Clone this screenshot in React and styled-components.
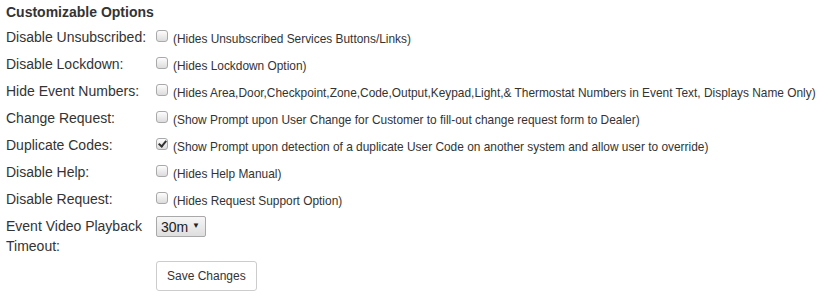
import React, { useState } from "react";
import styled, { createGlobalStyle } from "styled-components";

const GlobalStyle = createGlobalStyle`
  body {
    margin: 0;
    background: #fff;
    font-family: "Liberation Sans", Arial, sans-serif;
    color: #333;
  }
`;

const Container = styled.div`
  padding: 3px 6px 0;
`;

const Title = styled.div`
  font-size: 14px;
  font-weight: 700;
  line-height: 18px;
  margin-bottom: 2px;
`;

const Row = styled.div`
  display: flex;
  align-items: ${(p) => (p.$top ? "flex-start" : "center")};
  min-height: 27px;
  margin-top: ${(p) => (p.$top ? "4px" : "0")};
`;

const Label = styled.div`
  width: 150px;
  flex-shrink: 0;
  font-size: 14px;
  line-height: 20px;
`;

const Check = styled.input.attrs({ type: "checkbox" })`
  appearance: none;
  width: 12px;
  height: 12px;
  margin: 0 5px 0 0;
  border: 1px solid #a9a9a9;
  border-radius: 3px;
  background: linear-gradient(#fdfdfd, #dcdcdc);
  position: relative;
  top: -1px;
  flex-shrink: 0;

  &:checked::after {
    content: "";
    position: absolute;
    left: 3px;
    top: 0px;
    width: 3px;
    height: 6px;
    border: solid #333;
    border-width: 0 2px 2px 0;
    transform: rotate(40deg);
  }
`;

const Note = styled.span`
  font-size: 11.9px;
  position: relative;
  top: 2px;
`;

const SelectWrap = styled.div`
  position: relative;
  display: inline-block;
`;

const Select = styled.select`
  appearance: none;
  height: 21px;
  width: 50px;
  padding: 0 0 0 4px;
  border: 1px solid #a9a9a9;
  border-radius: 2px;
  background: linear-gradient(#f6f6f6, #dedede);
  font-family: "Liberation Sans", Arial, sans-serif;
  font-size: 14px;
  color: #222;
`;

const Arrow = styled.span`
  position: absolute;
  right: 6px;
  top: 5px;
  font-size: 8px;
  color: #222;
  pointer-events: none;
`;

const ButtonRow = styled.div`
  padding: 5px 0 0 150px;
`;

const Button = styled.button`
  height: 30px;
  padding: 0 10px;
  background: #fff;
  border: 1px solid #ccc;
  border-radius: 3px;
  font-family: "Liberation Sans", Arial, sans-serif;
  font-size: 12px;
  color: #333;
`;

const options = [
  ["Disable Unsubscribed:", "(Hides Unsubscribed Services Buttons/Links)", false],
  ["Disable Lockdown:", "(Hides Lockdown Option)", false],
  [
    "Hide Event Numbers:",
    "(Hides Area,Door,Checkpoint,Zone,Code,Output,Keypad,Light,& Thermostat Numbers in Event Text, Displays Name Only)",
    false,
  ],
  ["Change Request:", "(Show Prompt upon User Change for Customer to fill-out change request form to Dealer)", false],
  ["Duplicate Codes:", "(Show Prompt upon detection of a duplicate User Code on another system and allow user to override)", true],
  ["Disable Help:", "(Hides Help Manual)", false],
  ["Disable Request:", "(Hides Request Support Option)", false],
];

const App = () => {
  const [checked, setChecked] = useState(options.map((o) => o[2]));

  return (
    <Container>
      <GlobalStyle />
      <Title>Customizable Options</Title>
      {options.map(([label, note], i) => (
        <Row key={label}>
          <Label>{label}</Label>
          <Check
            checked={checked[i]}
            onChange={() => setChecked(checked.map((c, j) => (j === i ? !c : c)))}
          />
          <Note>{note}</Note>
        </Row>
      ))}
      <Row $top>
        <Label>Event Video Playback Timeout:</Label>
        <SelectWrap>
          <Select defaultValue="30m">
            <option>5m</option>
            <option>15m</option>
            <option>30m</option>
            <option>60m</option>
          </Select>
          <Arrow>▼</Arrow>
        </SelectWrap>
      </Row>
      <ButtonRow>
        <Button>Save Changes</Button>
      </ButtonRow>
    </Container>
  );
};

export default App;
